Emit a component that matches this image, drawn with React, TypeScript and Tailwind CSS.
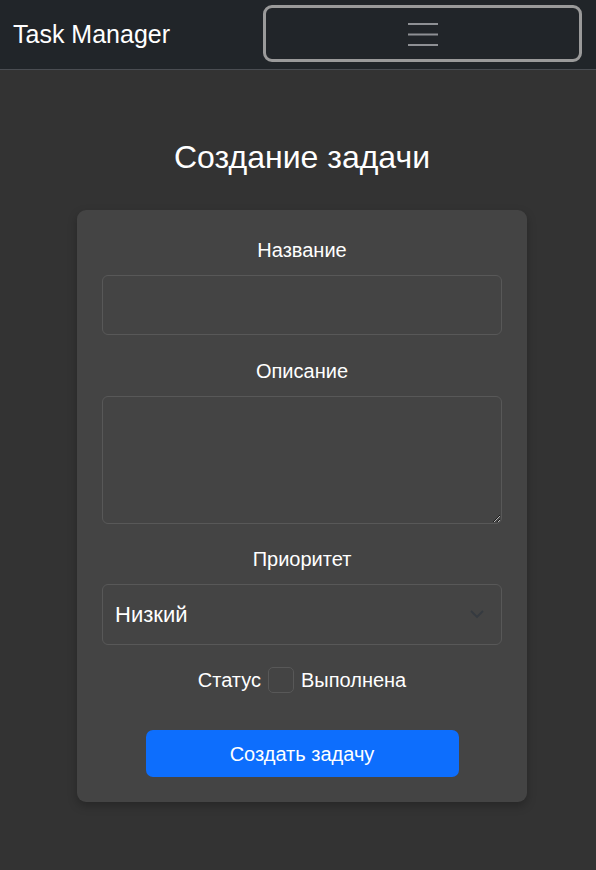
import { useState } from "react";

// Dark task form: navbar with a collapsed toggler, one centred card.
export default function App() {
  const [done, setDone] = useState(false);

  return (
    <div className="min-h-[870px] bg-[#333333] text-white font-['Liberation_Sans',Arial,sans-serif]">
      <nav className="flex h-[70px] items-center justify-between border-b border-[#4a4d52] bg-[#212529] pl-[13px] pr-[14px]">
        <span className="text-[25px] leading-none">Task Manager</span>
        <button
          type="button"
          className="flex h-[57px] w-[319px] items-center justify-center rounded-[9px] border-[3px] border-[#9a9a9a] mb-[2px]"
        >
          <svg width="32" height="24" viewBox="0 0 32 24" className="text-[#8e9094]">
            <path d="M1 2h30M1 12.5h30M1 23h30" stroke="currentColor" strokeWidth="2.2" />
          </svg>
        </button>
      </nav>

      <main className="flex flex-col items-center pl-[8px]">
        <h1 className="mt-[66px] mb-[32px] text-[32px] leading-[42px]">Создание задачи</h1>

        <form className="flex w-[450px] flex-col rounded-[9px] bg-[#444444] px-[25px] pt-[25px] pb-[25px] shadow-[0_4px_10px_rgba(0,0,0,0.25)]">
          <label className="mb-[10px] text-center text-[20px] leading-[30px]">Название</label>
          <input
            type="text"
            className="mb-[21px] h-[60px] rounded-[6px] border border-[#585858] bg-[#444444] px-[13px] text-[20px] outline-none"
          />

          <label className="mb-[10px] text-center text-[20px] leading-[30px]">Описание</label>
          <textarea className="mb-[20px] h-[128px] rounded-[6px] border border-[#585858] bg-[#444444] px-[13px] py-[8px] text-[20px] outline-none" />

          <label className="mb-[10px] text-center text-[20px] leading-[30px]">Приоритет</label>
          <div className="relative mb-[20px]">
            <select className="h-[61px] w-full appearance-none rounded-[6px] border border-[#585858] bg-[#444444] px-[12px] text-[22px] text-white outline-none">
              <option>Низкий</option>
              <option>Средний</option>
              <option>Высокий</option>
            </select>
            <svg
              width="14"
              height="10"
              viewBox="0 0 14 10"
              className="pointer-events-none absolute right-[18px] top-[25px] text-[#353a40]"
            >
              <path d="M1 2l6 6 6-6" stroke="currentColor" strokeWidth="1.8" fill="none" />
            </svg>
          </div>

          <div className="flex items-center justify-center gap-[7px] text-[20px] leading-[30px]">
            <span>Статус</span>
            <button
              type="button"
              onClick={() => setDone(!done)}
              className="h-[26px] w-[26px] rounded-[5px] border border-[#585858] bg-[#444444]"
            />
            <span>Выполнена</span>
          </div>

          <button
            type="button"
            className="mx-auto mt-[35px] h-[47px] w-[313px] rounded-[7px] bg-[#0d6efd] text-[20px]"
          >
            Создать задачу
          </button>
        </form>
      </main>
    </div>
  );
}
